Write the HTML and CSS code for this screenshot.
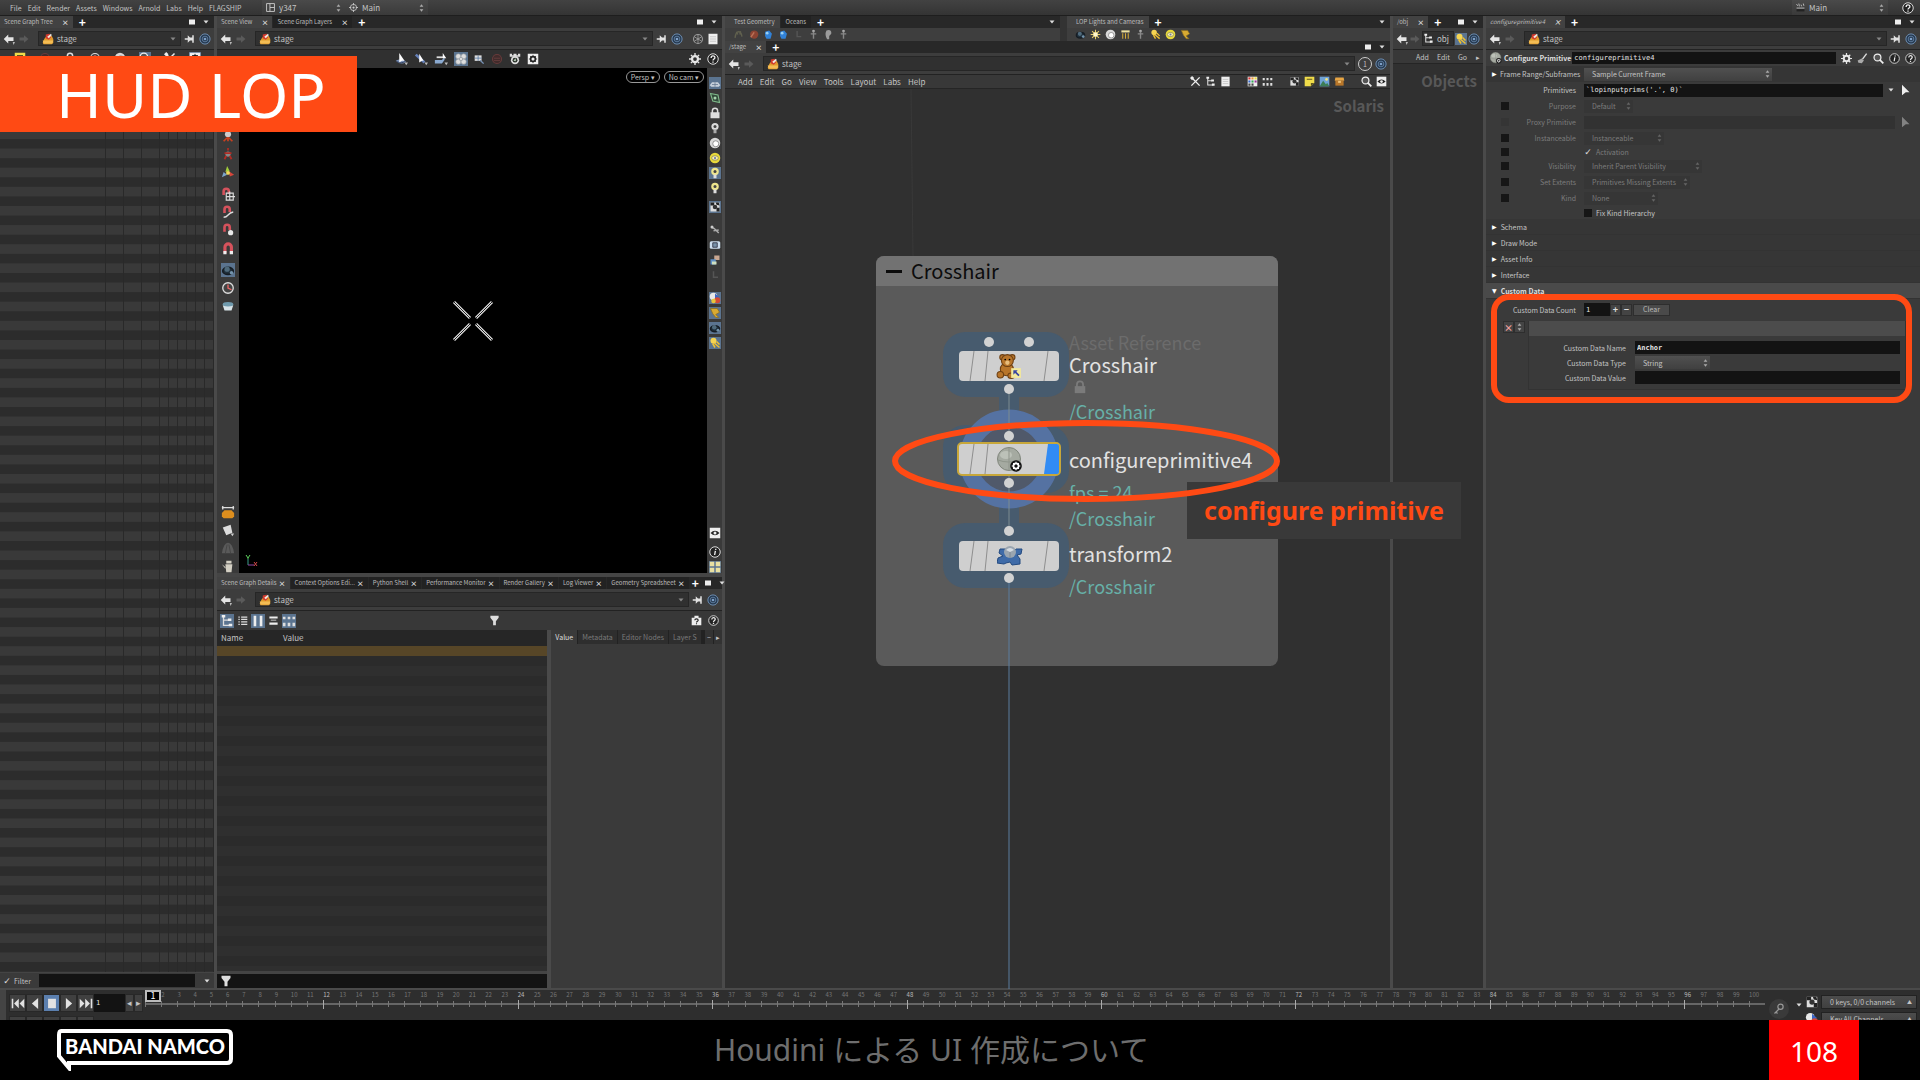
FILE: index.html
```html
<!DOCTYPE html>
<html lang="ja">
<head>
<meta charset="utf-8">
<title>HUD LOP</title>
<link rel="stylesheet" href="styles.css">
</head>
<body>
<svg class="defs" aria-hidden="true">
  <symbol id="back" viewBox="0 0 16 16"><path d="M1 8l6-6v3.500h7v5H7V14z" fill="#e4e4e4"/><path d="M13 12h3l-2 4z" fill="#bbb"/></symbol>
  <symbol id="fwd" viewBox="0 0 16 16"><path d="M14 8L8 3v3H2v4h6v3z" fill="#5a5a5a"/></symbol>
  <symbol id="tray" viewBox="0 0 16 16"><path d="M3 8l3-4h7l2 4v5l-2 2H2l-1-2z" fill="#e09a2c"/><path d="M1 10h14l-1 4H2z" fill="#f3bd55"/><path d="M5 2l5-1 2 5-3 3-4-2z" fill="#d23a2e"/><path d="M7 5l5-4 1 2-4 4z" fill="#f2e9df"/></symbol>
  <symbol id="pin" viewBox="0 0 16 16"><path d="M1 7h4V3l3 3h3V3h2v10h-2v-3H8l-3 3V9H1z" fill="#e2e2e2"/></symbol>
  <symbol id="ring" viewBox="0 0 16 16"><circle cx="8" cy="8" r="6.800" fill="#24384f" stroke="#6f8fb3" stroke-width="1.300"/><circle cx="8" cy="8" r="3.800" fill="none" stroke="#6f8fb3"/><circle cx="8" cy="8" r="1.800" fill="#7ea0c8"/></symbol>
  <symbol id="gear" viewBox="0 0 16 16"><circle cx="8" cy="8" r="4" fill="none" stroke="#e6e6e6" stroke-width="3"/><path d="M8 0v4M8 12v4M0 8h4M12 8h4M2.500 2.500l3 3M10.500 10.500l3 3M2.500 13.500l3-3M10.500 5.500l3-3" stroke="#e6e6e6" stroke-width="1.800"/></symbol>
  <symbol id="help" viewBox="0 0 16 16"><circle cx="8" cy="8" r="7" fill="#222" stroke="#ddd" stroke-width="1.300"/><path d="M5.500 6.500C5.500 3 10.500 3 10.500 6.200 10.500 8 8 8 8 10M8 11.300v1.700" fill="none" stroke="#eee" stroke-width="1.800"/></symbol>
  <symbol id="info" viewBox="0 0 16 16"><circle cx="8" cy="8" r="7" fill="#222" stroke="#ddd" stroke-width="1.300"/><path d="M9 3.500v1.700M8.500 6.500L7.500 12" stroke="#eee" stroke-width="1.800"/></symbol>
  <symbol id="search" viewBox="0 0 16 16"><circle cx="6.500" cy="6.500" r="5" fill="#555" stroke="#eee" stroke-width="1.800"/><path d="M10 10l5 5" stroke="#eee" stroke-width="2.500"/></symbol>
  <symbol id="win" viewBox="0 0 16 16"><path d="M2 3h12v10H2z" fill="#eee"/></symbol>
  <symbol id="down" viewBox="0 0 16 16"><path d="M3 5h10l-5 6z" fill="#ddd"/></symbol>
  <symbol id="updown" viewBox="0 0 8 16"><path d="M4 2l3 4H1zM4 14l3-4H1z" fill="#aaa"/></symbol>
  <symbol id="cursor" viewBox="0 0 16 16"><path d="M4 1l10 10H9l-5 4z" fill="#eee"/></symbol>
  <symbol id="sel1" viewBox="0 0 16 16"><path d="M2 10q6-4 12 1-6 5-12-1z" fill="#7d93ba"/><path d="M3 11q5 3 10 0" fill="none" stroke="#2b3a58"/><path d="M6 1l6 9-3 0-3 2z" fill="#fff"/><path d="M12 12h4l-2 3z" fill="#bbb"/></symbol>
  <symbol id="sel2" viewBox="0 0 16 16"><path d="M2 3l10 9" stroke="#6580b8" stroke-width="3"/><path d="M6 2l5 8-2 0-3 2z" fill="#fff"/><path d="M12 12h4l-2 3z" fill="#bbb"/></symbol>
  <symbol id="sel3" viewBox="0 0 16 16"><path d="M1 9h8l3-3v3l-3 4H1z" fill="#8aa9d0"/><path d="M3 6h8" stroke="#ddd" stroke-width="2"/><path d="M10 1l4 6h-4z" fill="#fff"/><path d="M12 12h4l-2 3z" fill="#bbb"/></symbol>
  <symbol id="flower" viewBox="0 0 16 16"><g fill="#ddd" stroke="#8b9299" stroke-width=".7"><circle cx="5" cy="5" r="3"/><circle cx="11" cy="5" r="3"/><circle cx="5" cy="11" r="3"/><circle cx="11" cy="11" r="3"/><circle cx="8" cy="8" r="2"/></g></symbol>
  <symbol id="boxzoom" viewBox="0 0 16 16"><path d="M1 2h10v8H1z" fill="#ddd"/><path d="M6 2v8M1 6h10" stroke="#456c9c"/><path d="M9 9l5 5" stroke="#7792b5" stroke-width="2"/></symbol>
  <symbol id="nogo" viewBox="0 0 16 16"><circle cx="8" cy="8" r="6" fill="#402b2b" stroke="#663b3b" stroke-width="1.500"/><path d="M4 7h8M4 10h8" stroke="#6b4040"/></symbol>
  <symbol id="camgear" viewBox="0 0 16 16"><path d="M1 1h3v2h2V1h4v2h2V1h3v4H1z" fill="#ddd"/><circle cx="8" cy="9.500" r="5.500" fill="#ddd"/><circle cx="8" cy="9.500" r="3.300" fill="#2c332c"/><path d="M6 10l3-3v4z" fill="#c9e0c9"/></symbol>
  <symbol id="boxgear" viewBox="0 0 16 16"><path d="M1 1h14v14H1z" fill="#eee"/><circle cx="8" cy="8" r="3" fill="none" stroke="#222" stroke-width="2.500"/><path d="M8 2.500v11M2.500 8h11M4 4l8 8M4 12l8-8" stroke="#222"/><circle cx="8" cy="8" r="2" fill="#eee"/></symbol>
  <symbol id="boxhelp" viewBox="0 0 16 16"><path d="M5 1h6v3h4v11H1V4h4z" fill="#eee"/><path d="M5.500 7.500C5.500 5 10.500 5 10.500 7.500 10.500 9 8 9 8 10.800M8 12v1.500" fill="none" stroke="#222" stroke-width="1.600"/></symbol>
  <symbol id="globe" viewBox="0 0 16 16"><circle cx="8" cy="8" r="6" fill="none" stroke="#999" stroke-width="1.500"/><path d="M3 5l10 6M3 11l10-6M8 2v12" stroke="#aaa"/></symbol>
  <symbol id="magnet" viewBox="0 0 16 16"><path d="M4.500 14V7a3.700 3.700 0 017.400 0v7" fill="none" stroke="#d5525c" stroke-width="3.600"/><path d="M2.700 11.500h3.600V15H2.700zM10 11.500h3.700V15H10z" fill="#eee"/></symbol>
  <symbol id="magnetg" viewBox="0 0 16 16"><path d="M3 9V5a3 3 0 016 0v3" fill="none" stroke="#d5525c" stroke-width="3"/><path d="M6 7h8v8H6zM10 5v10M6 11h10" fill="none" stroke="#ddd" stroke-width="1.300"/></symbol>
  <symbol id="magnetc" viewBox="0 0 16 16"><path d="M4 9V5a3 3 0 016 0v3" fill="none" stroke="#d5525c" stroke-width="3"/><path d="M3 14c6 0 4-5 11-6" fill="none" stroke="#ddd" stroke-width="1.500"/></symbol>
  <symbol id="magnetp" viewBox="0 0 16 16"><path d="M4 10V5a3 3 0 016 0v3" fill="none" stroke="#d5525c" stroke-width="3"/><circle cx="11" cy="11" r="3" fill="#e8e8e8"/></symbol>
  <symbol id="handle" viewBox="0 0 16 16"><circle cx="8" cy="6" r="3.500" fill="#ccc"/><path d="M8 9v5M3 14l4-4M13 14l-4-4" stroke="#c8401f" stroke-width="2"/></symbol>
  <symbol id="rig" viewBox="0 0 16 16"><circle cx="8" cy="8" r="3" fill="#888"/><path d="M8 1v3M4 14l2-4M12 14l-2-4M4 7h8" stroke="#b02c24" stroke-width="2"/></symbol>
  <symbol id="axes3" viewBox="0 0 16 16"><path d="M7 1l3 6-5 1z" fill="#a3cf3a"/><path d="M9 7l6 4-5 2z" fill="#d6463b"/><path d="M1 14l2-6 4 3z" fill="#7ba4ca"/><circle cx="8" cy="9" r="2.200" fill="#f0d95c"/></symbol>
  <symbol id="orbit" viewBox="0 0 16 16"><ellipse cx="8" cy="9" rx="6" ry="4" fill="#20303c" stroke="#161d24" stroke-width="2"/><circle cx="7" cy="7" r="3" fill="#4f6a7c"/><circle cx="12" cy="11" r="2" fill="#7493ab"/></symbol>
  <symbol id="clock" viewBox="0 0 16 16"><circle cx="8" cy="8" r="6" fill="#444" stroke="#ddd" stroke-width="1.500"/><path d="M8 4v4l4 2" fill="none" stroke="#e66" stroke-width="1.500"/></symbol>
  <symbol id="bowl" viewBox="0 0 16 16"><path d="M2 7h12l-2 6H4z" fill="#d8e3e8"/><ellipse cx="8" cy="6" rx="6" ry="2.500" fill="#6f9aad"/></symbol>
  <symbol id="drum" viewBox="0 0 16 16"><path d="M1 3h14M2 1v4M14 1v4" stroke="#ddd" stroke-width="1.500"/><path d="M1 9l3-3h8l3 3v4l-2 2H3l-2-2z" fill="#dd8e1e"/></symbol>
  <symbol id="note" viewBox="0 0 16 16"><path d="M2 5l9-3 2 9-7 3z" fill="#ddd"/><path d="M11 12h4l-2 3z" fill="#ccc"/></symbol>
  <symbol id="cone" viewBox="0 0 16 16"><path d="M1 14q2-12 7-12t7 12z" fill="#5a5a5a"/><path d="M5 14l2-10M11 14L9 4" stroke="#444"/></symbol>
  <symbol id="pot" viewBox="0 0 16 16"><path d="M5 6h8l-1 9H6zM6 2h6v3H6zM1 6l4 3v2z" fill="#d4d0c4"/></symbol>
  <symbol id="grid" viewBox="0 0 16 16"><path d="M1 11l3-4h8l3 4-2 2H3z" fill="#c7d0da"/><path d="M4 10h8M8 7v6" stroke="#63778f"/></symbol>
  <symbol id="plane" viewBox="0 0 16 16"><path d="M2 2l10 2 2 10-9-2z" fill="#314b3a" stroke="#7fb98a" stroke-width="1.500"/><circle cx="8" cy="8" r="2" fill="#a9d4ae"/></symbol>
  <symbol id="lock" viewBox="0 0 16 16"><path d="M2 7h12v8H2z" fill="#ddd"/><path d="M4.500 8V5a3.500 3.500 0 017 0v3" fill="none" stroke="#ddd" stroke-width="2"/></symbol>
  <symbol id="bulb" viewBox="0 0 16 16"><circle cx="8" cy="6" r="4.800" fill="#ddd"/><path d="M6 10h4v5H6z" fill="#aaa"/><circle cx="8" cy="6" r="2" fill="#444"/></symbol>
  <symbol id="ybulb" viewBox="0 0 16 16"><circle cx="8" cy="6" r="5" fill="#eee58c"/><path d="M6 10h4v5H6z" fill="#ddd"/><circle cx="8" cy="6" r="2" fill="#444"/></symbol>
  <symbol id="ball" viewBox="0 0 16 16"><circle cx="8" cy="8" r="7" fill="#d8d8d8"/><circle cx="9" cy="9" r="4" fill="#fff" stroke="#777"/></symbol>
  <symbol id="disc" viewBox="0 0 16 16"><circle cx="8" cy="8" r="7" fill="#e7d93a"/><ellipse cx="8" cy="8" rx="4.500" ry="3" fill="#fff6a8" stroke="#7b7a60"/><circle cx="8" cy="8" r="1.500" fill="#6a76b4"/></symbol>
  <symbol id="checker" viewBox="0 0 16 16"><path d="M2 2h12v12H2z" fill="#ddd"/><path d="M2 2h5v4H2zM10 9h4v5h-4zM9 2h4l1 4-4-1z" fill="#222"/><circle cx="8" cy="8" r="3" fill="#333"/></symbol>
  <symbol id="link" viewBox="0 0 16 16"><path d="M3 4l4 2 6 6M6 9l7-1" fill="none" stroke="#aaa" stroke-width="2"/><circle cx="4" cy="4" r="2" fill="#ccc"/></symbol>
  <symbol id="frame" viewBox="0 0 16 16"><rect x="1" y="3" width="14" height="10" rx="2" fill="#cde"/><path d="M5 5h6v6H5z" fill="#7790a8" stroke="#223"/></symbol>
  <symbol id="cubes" viewBox="0 0 16 16"><path d="M7 2h7v6H7z" fill="#c9a791"/><path d="M2 7h7v7H2z" fill="#5e8fc5"/><path d="M4 10h6v4H4z" fill="#cfe0c0"/></symbol>
  <symbol id="moon" viewBox="0 0 16 16"><path d="M6 3v8h6" fill="none" stroke="#555" stroke-width="2"/></symbol>
  <symbol id="rgb" viewBox="0 0 16 16"><circle cx="6" cy="6" r="5" fill="#e9e9e9"/><path d="M8 2l6 5-6 2z" fill="#3b66c4"/><circle cx="11" cy="11" r="4" fill="#d34a35"/><circle cx="6" cy="12" r="3" fill="#e8c63b"/></symbol>
  <symbol id="gold" viewBox="0 0 16 16"><path d="M2 2h9l3 5-5 3 4 4H9L5 9z" fill="#d8aa32" stroke="#8b6d1f"/></symbol>
  <symbol id="eye" viewBox="0 0 16 16"><path d="M1 1h14v14H1z" fill="#eee"/><path d="M2 8q6-6 12 0-6 6-12 0z" fill="#222"/><circle cx="8" cy="8" r="2" fill="#eee"/></symbol>
  <symbol id="quad" viewBox="0 0 16 16"><path d="M1 1h6v6H1zM9 1h6v6H9zM1 9h6v6H1zM9 9h6v6H9z" fill="#e9e0a0"/></symbol>
  <symbol id="funnel" viewBox="0 0 16 16"><path d="M2 1h12v3l-4 5v6H6V9L2 4z" fill="#ddd"/></symbol>
  <symbol id="tree" viewBox="0 0 16 16"><path d="M4 2v11h8M4 7h6" fill="none" stroke="#ddd" stroke-width="1.500"/><path d="M2 1h4v3H2zM9 5h4v3H9zM10 11h4v3h-4z" fill="#eee"/></symbol>
  <symbol id="list" viewBox="0 0 16 16"><path d="M2 3h2M6 3h9M2 6.500h2M6 6.500h9M2 10h2M6 10h9M2 13.500h2M6 13.500h9" stroke="#ddd" stroke-width="1.800"/></symbol>
  <symbol id="cols" viewBox="0 0 16 16"><path d="M3 2h3v12H3zM10 2h3v12h-3z" fill="#eee"/></symbol>
  <symbol id="rows" viewBox="0 0 16 16"><path d="M2 2h12v3H2zM4 7h8v1H4zM2 11h12v3H2z" fill="#eee"/></symbol>
  <symbol id="dots" viewBox="0 0 16 16"><path d="M1 3h3v3H1zM6.500 3h3v3h-3zM12 3h3v3h-3zM1 10h3v4H1zM6.500 10h3v4h-3zM12 10h3v4h-3z" fill="#ddd"/></symbol>
  <symbol id="tools" viewBox="0 0 16 16"><path d="M3 3l11 11M14 2L2 14" stroke="#eee" stroke-width="2"/><path d="M0 3l3-3 3 3-3 3z" fill="#eee"/></symbol>
  <symbol id="page" viewBox="0 0 16 16"><path d="M2 1h12v14H2z" fill="#eee"/><path d="M4 5h8M4 8h8M4 11h8" stroke="#bbb"/></symbol>
  <symbol id="palette" viewBox="0 0 16 16"><path d="M1 1h14v14H1z" fill="#eee"/><path d="M2 2h3v3H2z" fill="#d33"/><path d="M6.500 2h3v3h-3z" fill="#e93"/><path d="M11 2h3v3h-3z" fill="#ed3"/><path d="M2 6.500h3v3H2z" fill="#36c"/><path d="M6.500 6.500h3v3h-3z" fill="#3a5"/><path d="M11 6.500h3v3h-3z" fill="#939"/><path d="M2 11h3v3H2zM6.500 11h3v3h-3z" fill="#444"/></symbol>
  <symbol id="sticky" viewBox="0 0 16 16"><path d="M1 1h14v9l-5 5H1z" fill="#f0dc4a"/><path d="M10 15v-5h5zM4 4h8v1.500H4z" fill="#5d5420"/></symbol>
  <symbol id="image" viewBox="0 0 16 16"><path d="M1 1h14v14H1z" fill="#6fa3d6"/><path d="M1 15l5-8 4 5 2-2 3 5z" fill="#3d7d55"/><circle cx="11" cy="5" r="2" fill="#f0e384"/></symbol>
  <symbol id="crate" viewBox="0 0 16 16"><path d="M2 2h12l1 5H1z" fill="#e7a544"/><path d="M2 7h12v7H2z" fill="#b9772a"/><path d="M6 7h4v3H6z" fill="#f0c47a"/></symbol>
  <symbol id="bear" viewBox="0 0 24 24"><g fill="#b8752a" stroke="#6e4013"><circle cx="6" cy="4" r="2.500"/><circle cx="15" cy="4" r="2.500"/><ellipse cx="10" cy="15" rx="6" ry="6"/><circle cx="10.500" cy="7" r="5.500"/><ellipse cx="4" cy="20" rx="3" ry="3"/><ellipse cx="14" cy="21" rx="3" ry="2.500"/></g><circle cx="10.500" cy="9" r="2" fill="#e8bd7c"/><circle cx="8.500" cy="6" r=".8"/><circle cx="12.500" cy="6" r=".8"/><path d="M14 14h9v9h-9z" fill="#f3e99b"/><path d="M16 16h4l-1.200 1.200 3 3-1.200 1.200-3-3L16 20z" fill="#3b46a0"/></symbol>
  <symbol id="cprim" viewBox="0 0 26 26"><circle cx="12" cy="12" r="11.500" fill="#a5aaa1" stroke="#80867c"/><ellipse cx="9" cy="8" rx="6" ry="4" fill="#bcc1b8"/><path d="M12 1v22M1 13q10 4 22 0" stroke="#8f958b" fill="none"/><circle cx="19" cy="19" r="5.800" fill="#111"/><circle cx="19" cy="19" r="2.600" fill="none" stroke="#fff" stroke-width="1.600"/><path d="M19 14.700v8.600M14.700 19h8.600M16 16l6 6M16 22l6-6" stroke="#fff"/><circle cx="19" cy="19" r="1.500" fill="#111"/></symbol>
  <symbol id="xform" viewBox="0 0 26 20"><path d="M3 3h6l1 4 6-1 3-3h6l-1 5-4 1 3 4v5l-8 1-2-3-4 1-2 1-7-1 1-5 5-2-4-3z" fill="#3f6ba8" stroke="#234a80"/><circle cx="13" cy="6" r="6" fill="#9aa5b0"/><path d="M9 4q4-4 8 0l-4 2z" fill="#d6dce2"/><path d="M13 6v6" stroke="#7d8894"/></symbol>
  <symbol id="sun" viewBox="0 0 16 16"><circle cx="8" cy="8" r="3.500" fill="#fff2b0"/><path d="M8 1v14M1 8h14M3 3l10 10M3 13L13 3" stroke="#e9cf6a" stroke-width="1.500"/><circle cx="8" cy="8" r="3" fill="#fff7d2"/></symbol>
  <symbol id="area" viewBox="0 0 16 16"><path d="M2 2h12v3H2z" fill="#eee2a0"/><path d="M4 6v8M8 6v8M12 6v8" stroke="#d1a93a" stroke-width="1.500"/></symbol>
  <symbol id="spot" viewBox="0 0 16 16"><circle cx="6" cy="5" r="4" fill="#f5d452"/><path d="M7 8l7 6M10 6l4 4M5 9l3 5" stroke="#f0c231" stroke-width="2"/></symbol>
  <symbol id="blob" viewBox="0 0 16 16"><path d="M3 4l6-2 4 5-2 7-6 0-2-4z" fill="#3182d8"/><circle cx="6" cy="6" r="2" fill="#9ad0f2"/></symbol>
  <symbol id="tex" viewBox="0 0 16 16"><circle cx="9" cy="8" r="6" fill="#8c4332"/><path d="M4 12l5-7" stroke="#bb7257" stroke-width="2"/></symbol>
  <symbol id="man" viewBox="0 0 16 16"><circle cx="8" cy="3" r="2" fill="#aaa"/><path d="M8 4v10M4 7h8" stroke="#888" stroke-width="2"/></symbol>
  <symbol id="head" viewBox="0 0 16 16"><path d="M5 2q8-2 7 5l-3 3v5H6q-4-7-1-13z" fill="#9b9b9b"/></symbol>
  <symbol id="dark" viewBox="0 0 16 16"><path d="M3 13q1-9 5-9t5 7M5 4l2 4M11 3l-1 5" fill="none" stroke="#60604e" stroke-width="2"/></symbol>
  <symbol id="layout" viewBox="0 0 16 16"><path d="M1 1h14v14H1zM7 1v14M7 8h8" fill="none" stroke="#ccc" stroke-width="1.600"/></symbol>
  <symbol id="target" viewBox="0 0 16 16"><circle cx="8" cy="8" r="5.500" fill="none" stroke="#ccc" stroke-width="1.500"/><circle cx="8" cy="8" r="2" fill="#ccc"/><path d="M8 0v4M8 12v4M0 8h4M12 8h4" stroke="#ccc" stroke-width="1.500"/></symbol>
  <symbol id="shelfset" viewBox="0 0 16 16"><path d="M1 2l2 3M5 1l1 5M9 3l1 3M13 1l1 4M1 9h14" stroke="#ccc" stroke-width="1.500"/><path d="M1 11h14v4H1z" fill="#222"/></symbol>
  <symbol id="brush" viewBox="0 0 16 16"><path d="M14 1L8 9" stroke="#ddd" stroke-width="2"/><path d="M1 11l6-3 3 3-3 4-5-1z" fill="#aaa"/></symbol>
  <symbol id="key" viewBox="0 0 16 16"><circle cx="10" cy="5" r="3.500" fill="none" stroke="#999" stroke-width="1.600"/><path d="M8 8l-6 6M4 12l2 2" stroke="#999" stroke-width="1.600"/></symbol>
</svg>

<div class="app">
  <header class="menubar">
    <nav class="menus">
      <a href="#">File</a><a href="#">Edit</a><a href="#">Render</a><a href="#">Assets</a><a href="#">Windows</a><a href="#">Arnold</a><a href="#">Labs</a><a href="#">Help</a><a href="#">FLAGSHIP</a>
    </nav>
    <label class="pick"><svg class="i10"><use href="#layout"/></svg><select aria-label="Desktop"><option>y347</option></select><svg class="ud"><use href="#updown"/></svg></label>
    <label class="pick"><svg class="i10"><use href="#target"/></svg><select aria-label="Radial menu"><option>Main</option></select><svg class="ud"><use href="#updown"/></svg></label>
    <label class="pick last"><svg class="i10"><use href="#shelfset"/></svg><select aria-label="Shelf set"><option>Main</option></select><svg class="ud"><use href="#updown"/></svg></label>
    <svg class="i12"><use href="#help"/></svg>
  </header>

  <main class="panes">
    <section class="pane tree">
      <div class="tabs"><span class="tab on">Scene Graph Tree<b>×</b></span><span class="plus">+</span><svg class="i8 push"><use href="#win"/></svg><svg class="i8"><use href="#down"/></svg></div>
      <div class="path"><svg class="i12"><use href="#back"/></svg><svg class="i12"><use href="#fwd"/></svg><div class="loc"><svg class="i12"><use href="#tray"/></svg>stage<svg class="i8 drop"><use href="#down"/></svg></div><svg class="i12"><use href="#pin"/></svg><svg class="i12"><use href="#ring"/></svg></div>
      <div class="treebar"><svg class="i12"><use href="#sticky"/></svg><svg class="i12"><use href="#nogo"/></svg><svg class="i12"><use href="#lock"/></svg><svg class="i12"><use href="#clock"/></svg><svg class="i12"><use href="#ball"/></svg><svg class="i12 lit"><use href="#search"/></svg><svg class="i12"><use href="#tools"/></svg><svg class="i12 lit"><use href="#boxgear"/></svg></div>
      <div class="rows"><i></i><i></i><i></i><i></i><i></i><i></i><i></i><i></i><i></i><i></i></div>
      <div class="filter"><label><input type="checkbox" class="tick" checked>Filter</label><input type="text" class="dark" aria-label="Filter text"><svg class="i8"><use href="#down"/></svg></div>
    </section>

    <section class="pane view">
      <div class="tabs"><span class="tab on">Scene View<b>×</b></span><span class="tab">Scene Graph Layers<b>×</b></span><span class="plus">+</span><svg class="i8 push"><use href="#win"/></svg><svg class="i8"><use href="#down"/></svg></div>
      <div class="path"><svg class="i12"><use href="#back"/></svg><svg class="i12"><use href="#fwd"/></svg><div class="loc"><svg class="i12"><use href="#tray"/></svg>stage<svg class="i8 drop"><use href="#down"/></svg></div><svg class="i12"><use href="#pin"/></svg><svg class="i12"><use href="#ring"/></svg><svg class="i12 space"><use href="#globe"/></svg><svg class="i12"><use href="#page"/></svg></div>
      <div class="viewbar"><svg class="i14"><use href="#sel1"/></svg><svg class="i14"><use href="#sel2"/></svg><svg class="i14"><use href="#sel3"/></svg><svg class="i14 lit"><use href="#flower"/></svg><svg class="i10"><use href="#boxzoom"/></svg><svg class="i12"><use href="#nogo"/></svg><svg class="i12"><use href="#camgear"/></svg><svg class="i12"><use href="#boxgear"/></svg><svg class="i12 push"><use href="#gear"/></svg><svg class="i12"><use href="#help"/></svg></div>
      <div class="viewport">
        <div class="strip left">
          <svg class="i14"><use href="#handle"/></svg><svg class="i14"><use href="#rig"/></svg><svg class="i14"><use href="#axes3"/></svg>
          <svg class="i14 brk"><use href="#magnetg"/></svg><svg class="i14"><use href="#magnetc"/></svg><svg class="i14"><use href="#magnetp"/></svg><svg class="i14"><use href="#magnet"/></svg>
          <svg class="i14 lit brk"><use href="#orbit"/></svg><svg class="i14"><use href="#clock"/></svg><svg class="i14"><use href="#bowl"/></svg>
          <svg class="i14 down"><use href="#drum"/></svg><svg class="i14"><use href="#note"/></svg><svg class="i14"><use href="#cone"/></svg><svg class="i14"><use href="#pot"/></svg>
        </div>
        <div class="screen">
          <div class="cams"><button>Persp ▾</button><button>No cam ▾</button></div>
          <svg class="cross" viewBox="0 0 42 42"><path d="M2 2l16 16M40 2L24 18M2 40l16-16M40 40L24 24" stroke="#ddd" stroke-width="3"/><path d="M2 2l16 16M40 2L24 18M2 40l16-16M40 40L24 24" stroke="#222"/></svg>
          <svg class="gizmo" viewBox="0 0 14 14"><path d="M4 4v6" stroke="#3a9c8a"/><path d="M4 10h6" stroke="#9448a8"/><path d="M2 0l2 3 2-3M4 3v1" fill="none" stroke="#5fd35f"/><path d="M10 7l3 4M13 7l-3 4" stroke="#d34a4a"/></svg>
        </div>
        <div class="strip right">
          <svg class="i12 lit"><use href="#grid"/></svg><svg class="i12"><use href="#plane"/></svg><svg class="i12"><use href="#lock"/></svg><svg class="i12"><use href="#bulb"/></svg><svg class="i12"><use href="#ball"/></svg><svg class="i12"><use href="#disc"/></svg><svg class="i12 lit"><use href="#ybulb"/></svg><svg class="i12"><use href="#ybulb"/></svg><svg class="i12 lit nudge"><use href="#checker"/></svg>
          <svg class="i12 brk"><use href="#link"/></svg><svg class="i12"><use href="#frame"/></svg><svg class="i12"><use href="#cubes"/></svg><svg class="i12"><use href="#moon"/></svg>
          <svg class="i12 lit brk"><use href="#rgb"/></svg><svg class="i12 lit"><use href="#gold"/></svg><svg class="i12 lit"><use href="#orbit"/></svg><svg class="i12 lit"><use href="#spot"/></svg>
          <svg class="i12 down"><use href="#eye"/></svg><svg class="i12 nudge"><use href="#info"/></svg><svg class="i12 lit"><use href="#quad"/></svg>
        </div>
      </div>
      <div class="details">
        <div class="tabs"><span class="tab on">Scene Graph Details<b>×</b></span><span class="tab">Context Options Edi...<b>×</b></span><span class="tab">Python Shell<b>×</b></span><span class="tab">Performance Monitor<b>×</b></span><span class="tab">Render Gallery<b>×</b></span><span class="tab">Log Viewer<b>×</b></span><span class="tab">Geometry Spreadsheet<b>×</b></span><span class="plus">+</span><svg class="i8 push"><use href="#win"/></svg><svg class="i8"><use href="#down"/></svg></div>
        <div class="path"><svg class="i12"><use href="#back"/></svg><svg class="i12"><use href="#fwd"/></svg><div class="loc"><svg class="i12"><use href="#tray"/></svg>stage<svg class="i8 drop"><use href="#down"/></svg></div><svg class="i12"><use href="#pin"/></svg><svg class="i12"><use href="#ring"/></svg></div>
        <div class="detbar"><svg class="i14 lit"><use href="#tree"/></svg><svg class="i10"><use href="#list"/></svg><svg class="i14 lit"><use href="#cols"/></svg><svg class="i10"><use href="#rows"/></svg><svg class="i14 lit"><use href="#dots"/></svg><svg class="i10 mid"><use href="#funnel"/></svg><svg class="i10 push"><use href="#boxhelp"/></svg><svg class="i10"><use href="#help"/></svg></div>
        <div class="split">
          <div class="listing">
            <table><thead><tr><th class="name">Name</th><th>Value</th></tr></thead><tbody><tr class="hot"><td></td><td></td></tr></tbody></table>
            <div class="bars"></div>
            <label class="find"><svg class="i12"><use href="#funnel"/></svg><input type="text" aria-label="Filter details"></label>
          </div>
          <div class="values"><div class="subtabs"><span class="on">Value</span><span>Metadata</span><span>Editor Nodes</span><span>Layer S</span><button class="push">−</button><button>▸</button></div></div>
        </div>
      </div>
    </section>

    <section class="pane net">
      <div class="shelves">
        <div class="shelf"><div class="tabs"><span class="tab on">Test Geometry</span><span class="tab">Oceans</span><span class="plus">+</span><svg class="i8 push"><use href="#down"/></svg></div>
          <div class="tools"><svg class="i10"><use href="#dark"/></svg><svg class="i10"><use href="#tex"/></svg><svg class="i10"><use href="#blob"/></svg><svg class="i10"><use href="#blob"/></svg><svg class="i10"><use href="#moon"/></svg><svg class="i10"><use href="#man"/></svg><svg class="i10"><use href="#head"/></svg><svg class="i10"><use href="#man"/></svg></div></div>
        <div class="shelf"><div class="tabs"><span class="tab on">LOP Lights and Cameras</span><span class="plus">+</span><svg class="i8 push"><use href="#down"/></svg></div>
          <div class="tools"><svg class="i10"><use href="#orbit"/></svg><svg class="i10"><use href="#sun"/></svg><svg class="i10"><use href="#ball"/></svg><svg class="i10"><use href="#area"/></svg><svg class="i10"><use href="#man"/></svg><svg class="i10"><use href="#spot"/></svg><svg class="i10"><use href="#disc"/></svg><svg class="i10"><use href="#gold"/></svg></div></div>
      </div>
      <div class="tabs"><span class="tab on">/stage<b>×</b></span><span class="plus">+</span><svg class="i8 push"><use href="#win"/></svg><svg class="i8"><use href="#down"/></svg></div>
      <div class="path"><svg class="i12"><use href="#back"/></svg><svg class="i12"><use href="#fwd"/></svg><div class="loc"><svg class="i12"><use href="#tray"/></svg>stage<svg class="i8 drop"><use href="#down"/></svg></div><span class="one">1</span><svg class="i12"><use href="#ring"/></svg></div>
      <div class="netbar"><nav class="menus"><a href="#">Add</a><a href="#">Edit</a><a href="#">Go</a><a href="#">View</a><a href="#">Tools</a><a href="#">Layout</a><a href="#">Labs</a><a href="#">Help</a></nav>
        <svg class="i10 push"><use href="#tools"/></svg><svg class="i10"><use href="#tree"/></svg><svg class="i10"><use href="#page"/></svg><svg class="i10 gap"><use href="#palette"/></svg><svg class="i10"><use href="#dots"/></svg><svg class="i10 gap"><use href="#checker"/></svg><svg class="i10"><use href="#sticky"/></svg><svg class="i10"><use href="#image"/></svg><svg class="i10"><use href="#crate"/></svg><svg class="i10 gap"><use href="#search"/></svg><svg class="i10"><use href="#eye"/></svg></div>
      <div class="canvas">
        <span class="context">Solaris</span>
        <div class="box"><div class="boxhead"><i></i>Crosshair</div></div>
        <svg class="graph" viewBox="0 0 660 900">
          <path d="M186 0L188 167" stroke="#393939"/>
          <g fill="#475b6e"><rect x="218" y="243" width="126" height="65" rx="22"/><rect x="218" y="336" width="126" height="68" rx="22"/><rect x="218" y="434" width="126" height="65" rx="22"/><path d="M274 300h20v140h-20z"/></g>
          <circle cx="284" cy="370" r="41" fill="#50596a" stroke="#5572a2" stroke-width="17"/>
          <path d="M284 300v142" stroke="#7d8c90"/><path d="M284 489v411" stroke="#5a7c9e"/>
          <g fill="#cfcfcf"><rect x="234" y="262" width="100" height="30" rx="4"/><rect x="234" y="452" width="100" height="30" rx="4"/></g>
          <rect x="233" y="354" width="102" height="32" rx="4" fill="#cfcfcf" stroke="#c7a73a" stroke-width="2"/>
          <path d="M323 355h9q2 0 2 2v26q0 2-2 2h-13z" fill="#318bf4"/>
          <path d="M249 262l-4 30M263 262l-3 30M323 262l-4 30M249 355l-4 30M263 355l-3 30M249 452l-4 30M263 452l-3 30M323 452l-4 30" stroke="#8e8e8e"/>
          <g fill="#d2d2d2"><circle cx="264" cy="253" r="5"/><circle cx="304" cy="253" r="5"/><circle cx="284" cy="300" r="5"/><circle cx="284" cy="347" r="5"/><circle cx="284" cy="394" r="5"/><circle cx="284" cy="442" r="5"/><circle cx="284" cy="489" r="5"/></g>
          <use href="#bear" x="271" y="264" width="26" height="26"/><use href="#cprim" x="272" y="358" width="26" height="26"/><use href="#xform" x="272" y="457" width="26" height="20"/>
        </svg>
        <div class="cap n1"><span class="kind">Asset Reference</span><span class="nm">Crosshair</span><svg class="i14"><use href="#lock"/></svg><span class="pth">/Crosshair</span></div>
        <div class="cap n2"><span class="nm">configureprimitive4</span><span class="pth">fps = 24</span><span class="pth">/Crosshair</span></div>
        <div class="cap n3"><span class="nm">transform2</span><span class="pth">/Crosshair</span></div>
        <div class="callout">configure primitive</div>
        <svg class="oval" viewBox="0 0 390 84"><ellipse cx="195" cy="42" rx="191" ry="38" fill="none" stroke="#ff4a14" stroke-width="6"/></svg>
      </div>
    </section>

    <section class="pane obj">
      <div class="tabs"><span class="tab on">/obj<b>×</b></span><span class="plus">+</span><svg class="i8 push"><use href="#win"/></svg><svg class="i8"><use href="#down"/></svg></div>
      <div class="path"><svg class="i12"><use href="#back"/></svg><svg class="i12"><use href="#fwd"/></svg><div class="loc"><svg class="i10"><use href="#tree"/></svg>obj</div><svg class="i12 lit"><use href="#spot"/></svg><svg class="i12"><use href="#ring"/></svg></div>
      <div class="netbar"><nav class="menus"><a href="#">Add</a><a href="#">Edit</a><a href="#">Go</a></nav><span class="more">▸</span></div>
      <div class="canvas"><span class="context">Objects</span></div>
    </section>

    <section class="pane parms">
      <div class="tabs"><span class="tab on it">configureprimitive4<b>×</b></span><span class="plus">+</span><svg class="i8 push"><use href="#win"/></svg><svg class="i8"><use href="#down"/></svg></div>
      <div class="path"><svg class="i12"><use href="#back"/></svg><svg class="i12"><use href="#fwd"/></svg><div class="loc"><svg class="i12"><use href="#tray"/></svg>stage<svg class="i8 drop"><use href="#down"/></svg></div><svg class="i12"><use href="#pin"/></svg><svg class="i12"><use href="#ring"/></svg></div>
      <div class="nodehead"><svg class="i12"><use href="#cprim"/></svg><label for="nn">Configure Primitive</label><input id="nn" type="text" class="dark mono" value="configureprimitive4"><svg class="i10"><use href="#gear"/></svg><svg class="i10"><use href="#brush"/></svg><svg class="i10"><use href="#search"/></svg><svg class="i10"><use href="#info"/></svg><svg class="i10"><use href="#help"/></svg></div>
      <div class="form">
        <div class="row band"><span class="tri">▶</span><label for="p0">Frame Range/Subframes</label><span class="sel w188"><select id="p0"><option>Sample Current Frame</option></select><svg class="ud"><use href="#updown"/></svg></span></div>
        <div class="row"><span></span><label for="p1">Primitives</label><span class="wide"><input id="p1" type="text" class="dark mono" value="`lopinputprims('.', 0)`"><svg class="i8"><use href="#down"/></svg><svg class="i12"><use href="#cursor"/></svg></span></div>
        <div class="row off"><input type="checkbox" aria-label="Set purpose"><label for="p2">Purpose</label><span class="sel w49"><select id="p2"><option>Default</option></select><svg class="ud"><use href="#updown"/></svg></span></div>
        <div class="row off"><input type="checkbox" class="faint" aria-label="Set proxy"><label for="p3">Proxy Primitive</label><span class="wide"><input id="p3" type="text" class="shade"><svg class="i12"><use href="#cursor"/></svg></span></div>
        <div class="row off"><input type="checkbox" aria-label="Set instanceable"><label for="p4">Instanceable</label><span class="sel w80"><select id="p4"><option>Instanceable</option></select><svg class="ud"><use href="#updown"/></svg></span></div>
        <div class="row off low"><input type="checkbox" aria-label="Set activation"><span></span><label class="check"><input type="checkbox" class="tick" checked>Activation</label></div>
        <div class="row off"><input type="checkbox" aria-label="Set visibility"><label for="p5">Visibility</label><span class="sel w118"><select id="p5"><option>Inherit Parent Visibility</option></select><svg class="ud"><use href="#updown"/></svg></span></div>
        <div class="row off"><input type="checkbox" aria-label="Set extents flag"><label for="p6">Set Extents</label><span class="sel w106"><select id="p6"><option>Primitives Missing Extents</option></select><svg class="ud"><use href="#updown"/></svg></span></div>
        <div class="row off"><input type="checkbox" aria-label="Set kind"><label for="p7">Kind</label><span class="sel w74"><select id="p7"><option>None</option></select><svg class="ud"><use href="#updown"/></svg></span></div>
        <div class="row tiny"><span></span><span></span><label class="check"><input type="checkbox">Fix Kind Hierarchy</label></div>
        <div class="fold"><span class="tri">▶</span>Schema</div><div class="fold"><span class="tri">▶</span>Draw Mode</div><div class="fold"><span class="tri">▶</span>Asset Info</div><div class="fold"><span class="tri">▶</span>Interface</div><div class="fold open"><span class="tri">▼</span>Custom Data</div>
        <div class="custom">
          <div class="count"><label for="cc">Custom Data Count</label><input id="cc" type="text" class="dark mono" value="1"><button>+</button><button>−</button><button class="clear">Clear</button></div>
          <div class="entry"><div class="mini"><button class="x">×</button><button aria-label="Insert before"><svg class="ud"><use href="#updown"/></svg></button></div>
            <div class="card"><div class="cardhead"></div>
              <div class="field"><label for="c1">Custom Data Name</label><input id="c1" type="text" class="dark mono" value="Anchor"></div>
              <div class="field"><label for="c2">Custom Data Type</label><span class="sel w75"><select id="c2"><option>String</option></select><svg class="ud"><use href="#updown"/></svg></span></div>
              <div class="field"><label for="c3">Custom Data Value</label><input id="c3" type="text" class="dark mono" value=""></div>
            </div></div>
          <div class="marker"></div>
        </div>
      </div>
    </section>
  </main>

  <section class="playbar">
    <div class="transport">
      <div class="play"><button aria-label="First"><svg viewBox="0 0 16 14"><path d="M0 1h2v12H0zM9 1v12L3 7zM16 1v12l-6-6z"/></svg></button><button aria-label="Reverse"><svg viewBox="0 0 16 14"><path d="M12 0v14L4 7z"/></svg></button><button class="stop" aria-label="Stop"><svg viewBox="0 0 16 14"><path d="M3 1h10v12H3z"/></svg></button><button aria-label="Play"><svg viewBox="0 0 16 14"><path d="M4 0v14l8-7z"/></svg></button><button aria-label="Last"><svg viewBox="0 0 16 14"><path d="M14 1h2v12h-2zM0 1v12l6-6zM7 1v12l6-6z"/></svg></button><input type="text" class="dark mono" value="1" aria-label="Frame"><button class="slim" aria-label="Previous key">◂</button><button class="slim" aria-label="Next key">▸</button></div>
      <div class="play second"><button aria-label="Loop"><svg viewBox="0 0 16 14"><path d="M2 2h12v3H2z"/></svg></button><button aria-label="Audio"><svg viewBox="0 0 16 14"><path d="M9 0l4 3-8 9z"/></svg></button><button aria-label="Range"></button><button aria-label="Clock"><svg viewBox="0 0 16 14"><circle cx="8" cy="7" r="6"/></svg></button><button aria-label="Options"></button></div>
    </div>
    <div class="timeline"><span class="now">1</span><div class="ticks" id="ticks"></div></div>
    <div class="keyer"><span class="keyring"><svg class="i12"><use href="#key"/></svg></span><svg class="i8"><use href="#down"/></svg></div>
    <div class="channels">
      <svg class="i14"><use href="#checker"/></svg><button>0 keys, 0/0 channels<span>▲</span></button>
      <svg class="i14"><use href="#rgb"/></svg><button>Key All Channels<span>▲</span></button>
    </div>
  </section>
</div>

<h1 class="banner">HUD LOP</h1>

<footer class="foot">
  <svg class="logo" viewBox="0 0 178 42" role="img" aria-label="BANDAI NAMCO"><path d="M5 2h166q4 0 4 4v24q0 4-4 4H13v5L3 27V6q0-4 2-4z" fill="none" stroke="#fff" stroke-width="4"/><text x="89" y="25" text-anchor="middle">BANDAI NAMCO</text></svg>
  <p>Houdini による UI 作成について</p>
  <span class="num">108</span>
</footer>
<script src="timeline.js"></script>
</body>
</html>
```
FILE: styles.css
```css
* { box-sizing: border-box; }
body { margin: 0; min-height: 100vh; display: flex; flex-direction: column; position: relative; background: #000; color: #c4c4c4; font: 7px/12px "Noto Sans CJK JP", "Noto Sans", sans-serif; }
svg { display: block; flex: none; }
input, select, button { font: inherit; color: inherit; margin: 0; padding: 0; border: 0; border-radius: 0; background: none; appearance: none; min-width: 0; }
a { color: inherit; text-decoration: none; }
.defs { position: absolute; width: 0; height: 0; }
.i8 { width: 8px; height: 8px; }
.i10 { width: 11px; height: 11px; }
.i12 { width: 12px; height: 12px; }
.i14 { width: 14px; height: 14px; }
.lit { background: #5b7490; }
.push { margin-left: auto; }
.ud { width: 5px; height: 10px; }
.dark { background: #131313; }
.mono { font-family: "DejaVu Sans Mono", monospace; color: #e4e4e4; padding: 0 2px; }

.app { flex: 1; display: flex; flex-direction: column; background: #4a4a4a; overflow: hidden; }
.menubar { height: 16px; flex: none; display: flex; align-items: center; background: linear-gradient(#424242, #343434); padding: 0 6px 0 10px; border-bottom: 1px solid #1e1e1e; font-size: 8px; }
.menus { display: flex; gap: 6px; font-size: 8px; }
.menubar .menus { width: 252px; font-size: 7px; }
.pick { width: 83px; display: flex; align-items: center; gap: 4px; background: linear-gradient(#4a4a4a, #3a3a3a); padding: 0 4px; height: 15px; }
.pick select { flex: 1; }
.pick .i10 { width: 9px; height: 9px; }
.pick.last { margin-left: auto; width: 96px; margin-right: 14px; }

.panes { flex: 1; display: grid; grid-template-columns: minmax(0, 214fr) minmax(0, 505fr) minmax(0, 665fr) minmax(0, 90fr) minmax(0, 434fr); gap: 3px; }
.pane { display: flex; flex-direction: column; background: #3a3a3a; min-width: 0; }
.tabs { height: 12px; flex: none; display: flex; align-items: center; background: #282828; padding-right: 4px; gap: 1px; font-size: 6px; white-space: nowrap; }
.tabs .i8 + .i8 { margin-left: 5px; }
.tab { height: 12px; padding: 0 4px; background: #222; display: flex; gap: 9px; color: #bcbcbc; }
.tab.on { background: #424242; }
.tab b { color: #ddd; font-size: 7px; }
.it { font-style: italic; }
.plus { font-size: 12px; font-weight: 700; color: #fff; padding: 0 5px; }
.path { height: 22px; flex: none; display: flex; align-items: center; gap: 3px; padding: 0 3px; background: #3d3d3d; border-bottom: 1px solid #222; }
.loc { flex: 1; min-width: 0; height: 15px; margin-left: 5px; background: #303030; border: 1px solid #262626; display: flex; align-items: center; gap: 3px; padding: 0 3px; font-size: 8px; overflow: hidden; }
.drop { margin-left: auto; opacity: .5; }
.space { margin-left: 6px; }

.treebar { height: 22px; flex: none; display: flex; gap: 13px; padding: 2px 14px; background: #363636; }
.rows { flex: 1; display: flex; background: linear-gradient(#393939 50%, #2c2c2c 50%) 0 0 / 100% calc(100% / 47); padding-left: 88px; }
.rows i { width: 18px; border-right: 1px solid #292929; }
.rows i:nth-child(n+5) { width: 9px; }
.filter { height: 16px; flex: none; display: flex; align-items: center; gap: 8px; padding: 1px 3px; border-top: 1px solid #444; }
.filter label { display: flex; align-items: center; gap: 3px; }
.filter .dark { flex: 1; height: 13px; }

.viewbar { height: 18px; flex: none; display: flex; align-items: center; gap: 6px; padding: 0 3px 0 177px; background: #303030; }
.viewport { flex: 505 0 0; display: flex; min-height: 0; }
.screen { flex: 1; background: #000; position: relative; display: grid; place-items: center; }
.cross { width: 42px; height: 42px; }
.cams { position: absolute; top: 3px; right: 3px; display: flex; gap: 4px; }
.cams button { height: 12px; padding: 0 4px; border: 1px solid #999; border-radius: 6px; line-height: 9px; }
.gizmo { position: absolute; left: 5px; bottom: 4px; width: 14px; height: 14px; }
.strip { display: flex; flex-direction: column; align-items: center; background: #3a3a3a; }
.strip.left { width: 22px; padding-top: 61px; gap: 4px; }
.strip.left .brk { margin-top: 4px; }
.strip.right { width: 15px; padding-top: 9px; gap: 3px; }
.strip.right .brk { margin-top: 8px; }
.strip.right .nudge { margin-top: 4px; }
.strip .down.down { margin-top: auto; }

.details { flex: 411 0 0; display: flex; flex-direction: column; border-top: 4px solid #454545; min-height: 0; }
.details .tab { flex: 1 1 auto; justify-content: space-between; gap: 2px; }
.details .plus { padding: 0 2px; }
.details .push { margin-left: 2px; }
.detbar { height: 19px; flex: none; display: flex; align-items: center; gap: 3px; padding: 0 3px; background: #383838; }
.mid { margin-left: 190px; }
.detbar .push { margin-left: auto; margin-right: 3px; }
.split { flex: 1; display: flex; gap: 4px; background: #4a4a4a; min-height: 0; }
.listing { flex: 331; display: flex; flex-direction: column; background: #2c2c2c; }
table { border-collapse: collapse; width: 100%; }
th { height: 16px; padding: 0 4px; text-align: left; font-weight: 400; font-size: 8px; background: #262626; }
.name { width: 62px; }
td { height: 10px; padding: 0; background: #574627; }
.bars { flex: 1; background: linear-gradient(#2b2b2b 50%, #2f2f2f 50%) 0 0 / 100% 20px; }
.find { height: 17px; flex: none; display: flex; align-items: center; gap: 4px; padding: 0 3px; background: #131313; border-top: 3px solid #444; }
.find input { flex: 1; }
.values { flex: 171; min-width: 0; background: #3a3a3a; }
.subtabs { height: 14px; display: flex; gap: 1px; background: #222; white-space: nowrap; }
.subtabs span { padding: 1px 4px; background: #2e2e2e; color: #7a7a7a; }
.subtabs .on { background: #3a3a3a; color: #ddd; }
.subtabs .push { margin-left: auto; }
.subtabs button { width: 8px; background: #333; }

.shelves { display: grid; grid-template-columns: 335fr 323fr; gap: 7px; height: 25px; flex: none; background: #333; }
.tools { height: 13px; display: flex; gap: 4px; padding: 1px 8px; background: #3e3e3e; }
.shelf .tab { padding: 0 5px 0 9px; }
.shelf .tab + .tab { padding: 0 5px; }
.one { width: 14px; height: 14px; border: 1px solid #ccc; border-radius: 50%; text-align: center; }
.netbar { height: 14px; flex: none; display: flex; align-items: center; gap: 4px; padding: 0 3px 0 13px; background: #383838; border-bottom: 1px solid #252525; }
.net .netbar .menus { gap: 7px; }
.netbar .gap { margin-left: 12px; }
.obj .netbar { padding-left: 23px; }
.obj .loc { margin-left: 0; padding: 0; }
.obj .path { gap: 1px; }
.obj .menus { gap: 8px; font-size: 7px; }
.more { margin-left: auto; }
.canvas { flex: 1; position: relative; background: #303030; }
.context { position: absolute; top: 8px; right: 6px; font-size: 15px; line-height: 18px; font-weight: 700; color: #585858; }
.box { position: absolute; left: 151px; top: 167px; width: 402px; height: 410px; border-radius: 8px; background: #5a5a5a; overflow: hidden; }
.boxhead { height: 30px; padding-left: 10px; display: flex; align-items: center; gap: 9px; background: #727272; color: #0c0c0c; font-size: 20px; line-height: 30px; }
.boxhead i { width: 16px; height: 3px; background: #0c0c0c; }
.graph { position: absolute; left: 0; top: 0; width: 660px; height: 900px; }
.cap { position: absolute; left: 344px; display: flex; flex-direction: column; white-space: nowrap; }
.nm { font-size: 20px; line-height: 24px; color: #e2e2e2; }
.kind { font-size: 18px; line-height: 22px; color: #6c6c6c; }
.pth { font-size: 18px; line-height: 26px; color: #67b0a8; }
.cap .i14 { margin: 3px 0 4px 4px; opacity: .25; }
.n1 { top: 242px; }
.n2 { top: 359px; }
.n2 .nm, .n3 .nm { margin-bottom: 7px; }
.n3 { top: 453px; }
.callout { position: absolute; z-index: 2; left: 462px; top: 393px; padding: 0 17px; background: #393939; color: #ff4a14; font: 700 25px/57px "Noto Sans", sans-serif; white-space: nowrap; }
.oval { position: absolute; z-index: 3; left: 166px; top: 330px; width: 390px; height: 84px; }

.nodehead { height: 16px; flex: none; display: flex; align-items: center; gap: 5px; padding: 0 4px; background: #3c3c3c; }
.nodehead label { font-weight: 700; color: #ddd; margin: 0 -4px 0 -3px; }
.nodehead .dark { flex: 1; height: 12px; }
.form { display: flex; flex-direction: column; }
.row { height: 16px; display: grid; grid-template-columns: 8px 67px 1fr; align-items: center; padding-left: 15px; }
.row > label:nth-child(2) { text-align: right; white-space: nowrap; }
.row > :nth-child(3) { margin-left: 8px; }
.band { background: #353535; padding-left: 6px; grid-template-columns: 8px 76px 1fr; }
.row.low { height: 12px; }
.row.tiny { height: 13px; }
.off { color: #7c7c7c; }
.off svg { opacity: .4; }
input[type="checkbox"] { width: 8px; height: 8px; background: #161616; flex: none; }
input[type="checkbox"].faint { background: #353535; }
input[type="checkbox"].tick { background: none; display: grid; place-items: center; color: #ddd; }
input.tick::before { content: "✓"; font: 700 9px/8px "DejaVu Sans", sans-serif; }
.check { display: flex; align-items: center; gap: 4px; }
.sel { display: flex; align-items: center; height: 13px; padding: 0 2px 0 8px; background: linear-gradient(#505050, #404040); }
.off .sel { background: #363636; }
.sel select { flex: 1; }
.w188 { width: 188px; } .w49 { width: 49px; } .w80 { width: 80px; } .w118 { width: 118px; } .w106 { width: 106px; } .w74 { width: 74px; } .w75 { width: 75px; }
.wide { display: flex; align-items: center; gap: 4px; padding-right: 9px; }
.wide input { flex: 1; height: 13px; }
.shade { background: #323232; }
.tri { font: 6px/12px "DejaVu Sans", sans-serif; color: #fff; }
.fold { height: 16px; padding: 2px 6px; display: flex; gap: 4px; background: #363636; border-bottom: 1px solid #333; }
.fold.open { background: #4a4a4a; font-weight: 700; color: #ddd; }
.custom { position: relative; padding: 4px 14px 13px 17px; }
.custom button { width: 11px; height: 12px; background: #444; border: 1px solid #2e2e2e; line-height: 9px; color: #ddd; display: grid; place-items: center; }
.count { display: flex; height: 13px; align-items: center; margin-bottom: 5px; }
.count label { width: 73px; text-align: right; margin-right: 8px; }
.count .dark { width: 26px; height: 13px; }
.count button { font-weight: 700; font-size: 9px; }
.custom .clear { width: 37px; margin-left: 1px; background: #4a4a4a; color: #bbb; font-weight: 400; font-size: 7px; }
.entry { display: flex; gap: 3px; }
.mini { display: flex; }
.custom .x { color: #f2a0a0; font-weight: 700; font-size: 9px; }
.card { flex: 1; display: flex; flex-direction: column; gap: 2px; padding-bottom: 5px; border: 1px solid #333; border-top: 0; }
.cardhead { height: 15px; margin-bottom: 3px; background: #4c4c4c; }
.field { display: flex; align-items: center; height: 13px; padding-right: 5px; }
.field label { width: 97px; text-align: right; margin-right: 9px; }
.field .dark { flex: 1; height: 13px; font-weight: 700; }
.marker { position: absolute; left: 5px; right: 8px; top: -5px; bottom: 0; border: 6px solid #ff4a14; border-radius: 18px; pointer-events: none; }

.playbar { height: 32px; flex: none; display: flex; background: #2e2e2e; border-top: 2px solid #4a4a4a; overflow: hidden; }
.transport { width: 145px; padding: 4px 0 0 3px; border-left: 6px solid #444; }
.play { display: flex; height: 18px; }
.play.second { margin-top: 4px; }
.play button { width: 17px; background: #404040; border: 1px solid #282828; display: grid; place-items: center; }
.play button svg { width: 14px; height: 11px; fill: #e2e2e2; }
.play .stop { background: #5b7fae; }
.play .dark { width: 31px; }
.play .slim { width: 9px; font-size: 9px; }
.timeline { flex: 1; position: relative; }
.now { position: absolute; left: 0; top: 0; width: 16px; height: 12px; border: 2px solid #bbb; background: #000; color: #fff; text-align: center; font-size: 9px; line-height: 8px; z-index: 1; }
.ticks { display: flex; }
.tk { flex: 1 1 0; min-width: 0; height: 15px; position: relative; color: #777; font-size: 6px; line-height: 9px; border-bottom: 2px solid #666; }
.tk::after { content: ""; position: absolute; left: 0; top: 11px; height: 6px; border-left: 1px solid #777; }
.tk.big { color: #bbb; }
.tk.big::after { height: 9px; top: 10px; border-color: #aaa; }
.keyer { width: 40px; display: flex; align-items: center; gap: 6px; padding-left: 4px; }
.keyring { width: 20px; height: 20px; border-radius: 50%; background: #3a3a3a; display: grid; place-items: center; margin-top: 8px; }
.channels { width: 115px; display: grid; grid-template-columns: 14px 1fr; gap: 2px; row-gap: 3px; align-content: start; padding: 5px 3px 0 0; }
.channels button { height: 14px; display: flex; justify-content: space-between; align-items: center; padding: 0 4px 0 8px; background: linear-gradient(#4c4c4c, #404040); border: 1px solid #222; white-space: nowrap; }
.channels span { font-size: 5px; }

.banner { position: absolute; left: 0; top: 56px; margin: 0; width: 357px; height: 76px; padding-left: 56px; background: #ff4a14; color: #fff; font: 400 62px/76px "Noto Sans", sans-serif; white-space: nowrap; z-index: 5; }
.foot { height: 60px; flex: none; display: grid; grid-template-columns: 1fr auto 1fr; align-items: center; padding: 0 61px 0 56px; }
.foot p { margin: 0 52px 0 0; color: #6e6e6e; font: 30px/60px "Noto Sans", "Noto Sans CJK JP", sans-serif; }
.logo { width: 178px; height: 42px; }
.logo text { font: 900 20px Lato, sans-serif; fill: #fff; }
.num { justify-self: end; width: 90px; height: 60px; background: #f00; color: #fff; text-align: center; font: 28px/62px "Noto Sans", sans-serif; }
```
FILE: timeline.js
```js
const ticks = document.getElementById("ticks");
for (let f = 1; f <= 100; f++) {
  const t = document.createElement("div");
  t.className = f % 12 === 0 ? "tk big" : "tk";
  t.textContent = f === 1 ? "" : f;
  ticks.append(t);
}
```
